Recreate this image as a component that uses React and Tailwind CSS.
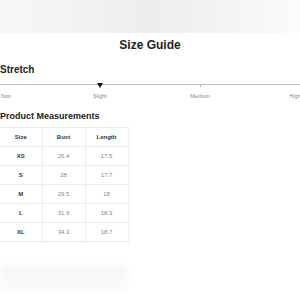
const rows = [
  { size: "XS", bust: "26.4", length: "17.5" },
  { size: "S", bust: "28", length: "17.7" },
  { size: "M", bust: "29.5", length: "18" },
  { size: "L", bust: "31.9", length: "18.3" },
  { size: "XL", bust: "34.3", length: "18.7" },
];

const App = () => {
  return (
    <div className="w-[300px] h-[300px] overflow-hidden bg-white font-['Liberation_Sans',Arial,sans-serif] text-[#222]">
      {/* blurred banner at the top */}
      <div className="h-[33px] bg-gradient-to-r from-[#f8f8f8] via-[#ededed] to-[#fbfbfb]" />

      <h1 className="mt-[5px] text-center text-[12px] leading-[14px] font-bold">Size Guide</h1>

      <h2 className="mt-[12px] text-[10px] leading-[12px] font-bold">Stretch</h2>

      {/* stretch scale */}
      <div className="relative mt-[8px] w-[306px]">
        <div className="h-[1px] bg-[#bdbdbd]" />
        <div className="absolute left-[97px] top-[-1px] w-0 h-0 border-l-[3px] border-r-[3px] border-t-[5px] border-l-transparent border-r-transparent border-t-[#111]" />
        <div className="absolute left-[200px] top-[1px] w-[1px] h-[2px] bg-[#bbb]" />
      </div>
      <div className="grid grid-cols-[50px_100px_100px_90px] mt-[7px] text-[5.5px] leading-[8px] text-[#888]">
        <span className="pl-[1px]">Non</span>
        <span className="text-center">Slight</span>
        <span className="text-center">Medium</span>
        <span className="text-center">High</span>
      </div>

      <h2 className="mt-[10px] text-[9px] leading-[12px] font-bold">Product Measurements</h2>

      <table className="mt-[5px] border-collapse text-[6px] text-center">
        <thead>
          <tr className="h-[19px]">
            <th className="w-[42px] border border-[#ececec] border-l-0 font-bold text-[#333]">Size</th>
            <th className="w-[43px] border border-[#ececec] font-bold text-[#333]">Bust</th>
            <th className="w-[43px] border border-[#ececec] font-bold text-[#333]">Length</th>
          </tr>
        </thead>
        <tbody>
          {rows.map((r) => (
            <tr key={r.size} className="h-[19px]">
              <td className="border border-[#ececec] border-l-0 font-bold text-[#333]">{r.size}</td>
              <td className="border border-[#ececec] text-[#888]">{r.bust}</td>
              <td className="border border-[#ececec] text-[#888]">{r.length}</td>
            </tr>
          ))}
        </tbody>
      </table>

      {/* faint blurred block below */}
      <div className="mt-[24px] w-[128px] h-[26px] bg-gradient-to-b from-[#f6f6f6] to-[#fcfcfc] blur-[2px]" />
    </div>
  );
};

export default App;
